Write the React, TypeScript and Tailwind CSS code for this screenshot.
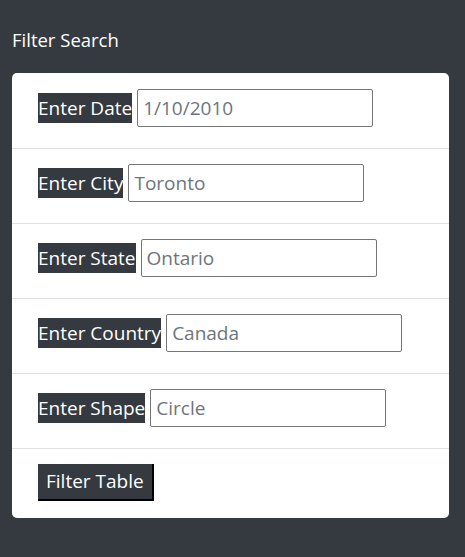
import React from "react";

const fields = [
  { label: "Enter Date", value: "1/10/2010" },
  { label: "Enter City", value: "Toronto" },
  { label: "Enter State", value: "Ontario" },
  { label: "Enter Country", value: "Canada" },
  { label: "Enter Shape", value: "Circle" },
];

export default function App() {
  return (
    <div className="min-h-[557px] bg-[#343a40] pt-[28px] pl-[12px] pr-[16px] pb-[39px]" style={{ fontFamily: '"Open Sans", "Noto Sans", sans-serif' }}>
      <h2 className="text-white text-[18.5px] leading-[24px] mb-[21px]">Filter Search</h2>
      <ul className="bg-white rounded-[5px] mt-[1px] pt-[1px]">
        {fields.map((f) => (
          <li key={f.label} className="h-[75px] flex items-center pl-[26px] border-b border-[#dee2e6]">
            <label className="bg-[#343a40] text-white text-[19px] leading-[30px] -mt-[6px]">{f.label}</label>
            <input
              readOnly
              value={f.value}
              className="ml-[5px] w-[236px] h-[38px] -mt-[6px] border border-[#767676] rounded-[2px] px-[5px] text-[19px] text-[#6c757d] outline-none"
              style={{ fontFamily: "inherit" }}
            />
          </li>
        ))}
        <li className="h-[69px] flex items-start pt-[15px] pl-[26px]">
          <button className="bg-[#343a40] text-white text-[19px] leading-[35px] px-[8px] border-r-2 border-b-2 border-black">Filter Table</button>
        </li>
      </ul>
    </div>
  );
}
